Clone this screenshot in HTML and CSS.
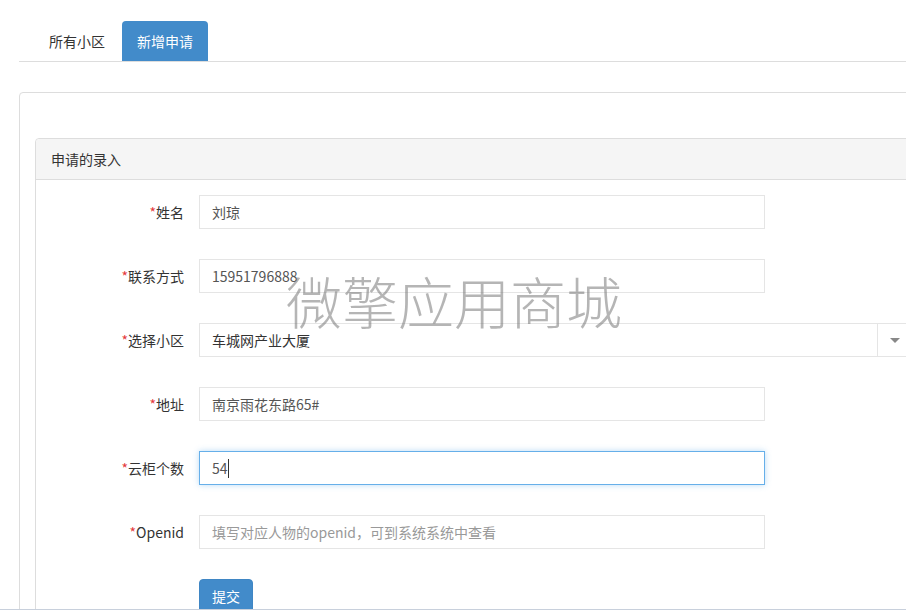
FILE: index.html
```html
<!DOCTYPE html>
<html lang="zh-CN">
<head>
    <meta charset="UTF-8">
    <title>新增申请</title>
    <link rel="stylesheet" href="styles.css">
</head>
<body>
<ul class="nav-tabs">
    <li class="tab"><a href="#">所有小区</a></li>
    <li class="tab active"><a href="#">新增申请</a></li>
</ul>

<div class="main-box">
    <div class="panel">
        <div class="panel-heading">申请的录入</div>
        <form class="panel-body">
            <div class="form-row">
                <label class="form-label"><span class="req">*</span>姓名</label>
                <input class="form-control" type="text" value="刘琼">
            </div>
            <div class="form-row">
                <label class="form-label"><span class="req">*</span>联系方式</label>
                <input class="form-control" type="text" value="15951796888">
            </div>
            <div class="form-row">
                <label class="form-label"><span class="req">*</span>选择小区</label>
                <div class="select-box">
                    <span class="select-text">车城网产业大厦</span>
                    <span class="select-arrow"></span>
                </div>
            </div>
            <div class="form-row">
                <label class="form-label"><span class="req">*</span>地址</label>
                <input class="form-control" type="text" value="南京雨花东路65#">
            </div>
            <div class="form-row">
                <label class="form-label"><span class="req">*</span>云柜个数</label>
                <div class="input-wrap">
                    <input class="form-control focused" type="text" value="54">
                    <span class="caret"></span>
                </div>
            </div>
            <div class="form-row">
                <label class="form-label"><span class="req">*</span>Openid</label>
                <input class="form-control" type="text" placeholder="填写对应人物的openid，可到系统系统中查看">
            </div>
            <div class="form-row">
                <span class="form-label"></span>
                <button class="btn-primary" type="button">提交</button>
            </div>
        </form>
    </div>
</div>

<div class="watermark">微擎应用商城</div>
<div class="bottom-edge"></div>
</body>
</html>
```

FILE: styles.css
```css
html, body {
    margin: 0;
    padding: 0;
    background: #fff;
    overflow: hidden;
}

body {
    font-family: "Noto Sans CJK SC", "Microsoft YaHei", sans-serif;
    font-size: 14px;
    color: #333;
    width: 1100px;
}

.nav-tabs {
    list-style: none;
    margin: 0 0 0 19px;
    padding: 21px 0 0 15px;
    display: flex;
    border-bottom: 1px solid #ddd;
}

.tab {
    margin-right: 2px;
}

.tab a {
    display: block;
    padding: 10px 15px;
    line-height: 20px;
    color: #333;
    text-decoration: none;
    border-radius: 4px 4px 0 0;
}

.tab.active a {
    background: #428bca;
    color: #fff;
}

.main-box {
    margin: 30px 0 0 19px;
    width: 1000px;
    border: 1px solid #ddd;
    border-radius: 4px;
    padding: 45px 15px 0;
    height: 600px;
}

.panel {
    border: 1px solid #ddd;
    border-radius: 4px;
}

.panel-heading {
    background: #f5f5f5;
    border-bottom: 1px solid #ddd;
    padding: 10px 15px;
    line-height: 20px;
    font-size: 14px;
    border-radius: 4px 4px 0 0;
}

.panel-body {
    padding: 15px;
    margin: 0;
}

.form-row {
    display: flex;
    align-items: center;
    margin-bottom: 30px;
}

.form-label {
    width: 133px;
    margin-right: 15px;
    text-align: right;
    line-height: 20px;
    flex-shrink: 0;
}

.req {
    color: #e4393c;
}

.form-control {
    box-sizing: border-box;
    width: 566px;
    height: 34px;
    padding: 6px 12px;
    font-family: inherit;
    font-size: 14px;
    color: #555;
    border: 1px solid #e5e5e5;
    border-radius: 0;
    outline: none;
    background: #fff;
}

.form-control::placeholder {
    color: #999;
}

.form-control.focused {
    border-color: #66afe9;
    box-shadow: 0 0 6px rgba(102, 175, 233, .45);
}

.input-wrap {
    position: relative;
}

.caret {
    position: absolute;
    left: 29px;
    top: 8px;
    width: 1px;
    height: 19px;
    background: #333;
}

.select-box {
    box-sizing: border-box;
    width: 714px;
    height: 34px;
    display: flex;
    align-items: center;
    border: 1px solid #e5e5e5;
    color: #333;
}

.select-text {
    flex: 1;
    padding-left: 12px;
}

.select-arrow {
    width: 34px;
    height: 100%;
    border-left: 1px solid #e5e5e5;
    position: relative;
}

.select-arrow::after {
    content: "";
    position: absolute;
    left: 12px;
    top: 14px;
    border-left: 5px solid transparent;
    border-right: 5px solid transparent;
    border-top: 5px solid #888;
}

.btn-primary {
    font-family: inherit;
    font-size: 14px;
    line-height: 20px;
    padding: 6px 12px;
    background: #428bca;
    border: 1px solid #3f86c4;
    border-radius: 4px;
    color: #fff;
}

.watermark {
    position: fixed;
    left: 286px;
    top: 272px;
    font-size: 56px;
    line-height: 1;
    font-weight: 300;
    color: rgba(120, 120, 120, .55);
    white-space: nowrap;
    pointer-events: none;
}

.bottom-edge {
    position: fixed;
    left: 0;
    right: 0;
    bottom: 0;
    height: 1px;
    background: #c8d0dc;
}
```
